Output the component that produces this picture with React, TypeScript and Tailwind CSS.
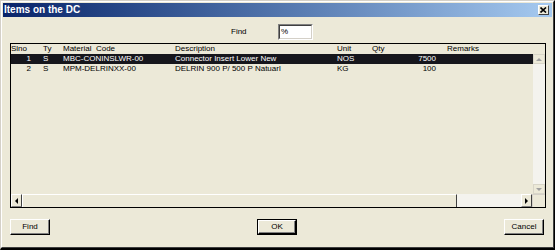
import React from "react";

const font = { fontFamily: '"Liberation Sans", Arial, sans-serif' };

function Tri({ dir, color }: { dir: "up" | "down" | "left" | "right"; color: string }) {
  const pts =
    dir === "up"
      ? "0,3 3,0 6,3"
      : dir === "down"
      ? "0,0 6,0 3,3"
      : dir === "left"
      ? "3,0 3,6 0,3"
      : "0,0 0,6 3,3";
  const w = dir === "up" || dir === "down" ? 6 : 3;
  const h = dir === "up" || dir === "down" ? 3 : 6;
  return (
    <svg width={w} height={h} viewBox={`0 0 ${w} ${h}`}>
      <polygon points={pts} fill={color} />
    </svg>
  );
}

const rows = [
  { sl: "1", ty: "S", code: "MBC-CONINSLWR-00", desc: "Connector Insert Lower New", unit: "NOS", qty: "7500", rem: "" },
  { sl: "2", ty: "S", code: "MPM-DELRINXX-00", desc: "DELRIN 900 P/ 500 P Natuarl", unit: "KG", qty: "100", rem: "" },
];

const cols = "grid grid-cols-[29px_20px_112px_162px_35px_71px_1fr]";

function Btn({ label, def }: { label: string; def?: boolean }) {
  return (
    <div className={def ? "border border-black" : ""}>
      <div
        className={`${def ? "w-[38px] h-[14px]" : "w-[40px] h-[16px]"} bg-[#ece9d8] border-t border-l border-t-white border-l-white border-r border-b border-r-black border-b-black shadow-[inset_-1px_-1px_0_#808080] flex items-center justify-center text-[8px] text-black leading-none`}
      >
        {label}
      </div>
    </div>
  );
}

export default function App() {
  return (
    <div style={font} className="w-[555px] h-[250px] border-t border-l border-t-[#d4d0c8] border-l-[#d4d0c8] border-r border-b-2 border-r-black border-b-black bg-[#d4d0c8]">
      <div className="h-full border-t border-l border-t-white border-l-white border-r border-b border-r-[#404040] border-b-[#404040] bg-[#ece9d8] p-px flex flex-col">
        {/* Title bar */}
        <div className="h-[14px] bg-gradient-to-r from-[#0a246a] to-[#a6caf0] flex items-center justify-between pl-[1px] pr-[3px]">
          <span className="text-white font-bold text-[10px] leading-none">Items on the DC</span>
          <div className="w-[11px] h-[10px] bg-[#ece9d8] border-t border-l border-t-white border-l-white border-r border-b border-r-[#404040] border-b-[#404040] flex items-center justify-center">
            <svg width="7" height="6" viewBox="0 0 7 6">
              <path d="M0.5 0.5 L6 5.5 M6 0.5 L0.5 5.5" stroke="black" strokeWidth="1.6" />
            </svg>
          </div>
        </div>

        {/* Find row */}
        <div className="mt-[7px] h-[16px] flex items-center pl-[228px]">
          <span className="text-[8px] text-black w-[47px]">Find</span>
          <div className="w-[35px] h-[16px] border-t border-l border-t-[#808080] border-l-[#808080] border-r border-b border-r-white border-b-white">
            <div className="h-full bg-white border-t border-l border-t-[#404040] border-l-[#404040] border-r border-b border-r-[#d4d0c8] border-b-[#d4d0c8] text-[8px] leading-[12px] pl-[1px] text-black">
              %
            </div>
          </div>
        </div>

        {/* Grid */}
        <div className="mt-[3px] ml-[7px] mr-[6px] h-[165px] border border-black bg-[#ece9d8] flex flex-col text-[8px] text-black">
          <div className={`${cols} h-[10px] leading-[10px] shrink-0`}>
            <div>Slno</div>
            <div className="pl-[3px]">Ty</div>
            <div className="pl-[3px]">Material&nbsp; Code</div>
            <div className="pl-[3px]">Description</div>
            <div className="pl-[3px]">Unit</div>
            <div className="pl-[3px]">Qty</div>
            <div className="pl-[7px]">Remarks</div>
          </div>
          <div className="flex-1 flex min-h-0">
            <div className="flex-1 flex flex-col">
              {rows.map((r, i) => (
                <div
                  key={r.sl}
                  className={`${cols} h-[10px] leading-[10px] ${i === 0 ? "bg-[#16161c] text-white" : ""}`}
                >
                  <div className="text-right pr-[9px]">{r.sl}</div>
                  <div className="pl-[3px]">{r.ty}</div>
                  <div className="pl-[3px]">{r.code}</div>
                  <div className="pl-[3px] whitespace-nowrap">{r.desc}</div>
                  <div className="pl-[3px]">{r.unit}</div>
                  <div className="text-right pr-[4px]">{r.qty}</div>
                  <div className="pl-[7px]">{r.rem}</div>
                </div>
              ))}
            </div>
            {/* vertical scrollbar */}
            <div className="w-[12px] flex flex-col bg-[#f4f3ee]">
              <div className="h-[10px] bg-[#ece9d8] border border-[#d8d5c8] flex items-center justify-center">
                <Tri dir="up" color="#a0a0a0" />
              </div>
              <div className="flex-1" />
              <div className="h-[10px] bg-[#ece9d8] border border-[#d8d5c8] flex items-center justify-center">
                <Tri dir="down" color="#a0a0a0" />
              </div>
            </div>
          </div>
          {/* horizontal scrollbar */}
          <div className="h-[13px] flex shrink-0">
            <div className="w-[11px] bg-[#ece9d8] border-t border-l border-t-white border-l-white border-r border-b border-r-[#404040] border-b-[#808080] flex items-center justify-center">
              <Tri dir="left" color="#000" />
            </div>
            <div className="w-[435px] bg-[#ece9d8] border-t border-l border-t-white border-l-white border-r border-r-[#404040]" />
            <div className="flex-1 bg-[#f4f3ee]" />
            <div className="w-[11px] bg-[#ece9d8] border-t border-l border-t-white border-l-white border-r border-b border-r-[#404040] border-b-[#808080] flex items-center justify-center">
              <Tri dir="right" color="#000" />
            </div>
            <div className="w-[13px] bg-[#ece9d8] border-t border-l border-t-[#d4d0c8] border-l-[#d4d0c8]" />
          </div>
        </div>

        {/* Buttons */}
        <div className="mt-[11px] ml-[7px] mr-[8px] flex justify-between">
          <Btn label="Find" />
          <Btn label="OK" def />
          <Btn label="Cancel" />
        </div>
      </div>
    </div>
  );
}
